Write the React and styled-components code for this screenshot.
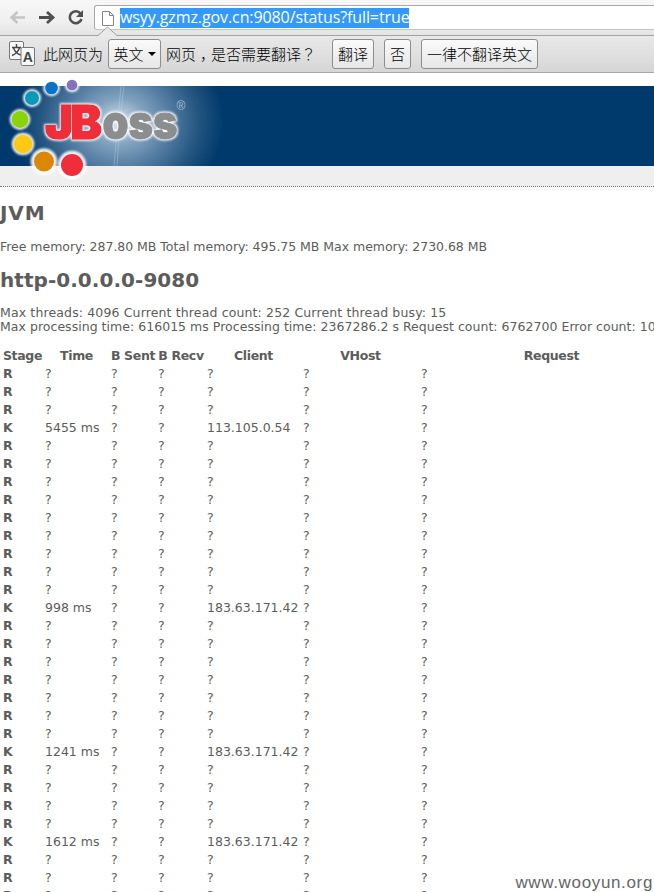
import React from "react";
import styled, { createGlobalStyle } from "styled-components";

const GlobalStyle = createGlobalStyle`
  * { box-sizing: border-box; }
  body { margin: 0; background: #fff; overflow: hidden; }
`;

const Page = styled.div`
  position: relative;
  width: 654px;
  height: 892px;
  overflow: hidden;
  background: #fff;
  color: #5c5c5c;
  font: 12.5px/14px "DejaVu Sans", Verdana, sans-serif;
`;

const Toolbar = styled.div`
  display: flex;
  align-items: flex-start;
  height: 36px;
  padding: 5px 0 0;
  background: linear-gradient(#f7f7f7, #f0f0f0 60%, #e4e4e4);
  border-bottom: 1px solid #a3a3a3;
`;

const NavIcons = styled.svg`
  flex: none;
  width: 94px;
  height: 25px;
`;

const AddressBar = styled.div`
  flex: 1;
  display: flex;
  align-items: center;
  height: 25px;
  padding-left: 6px;
  background: #fff;
  border: 1px solid #a9a9a9;
  border-bottom-color: #c4c4c4;
  border-right: 0;
  border-radius: 3px 0 0 3px;
`;

const FileIcon = styled.svg`
  flex: none;
  width: 14px;
  height: 18px;
  margin-right: 5px;
`;

const SelectedUrl = styled.span`
  width: 289px;
  height: 20px;
  background: #3399ff;
  color: #fff;
  font: 16px/19px "Open Sans", "Noto Sans", sans-serif;
  letter-spacing: -0.1px;
  white-space: nowrap;
`;

const TranslateBar = styled.div`
  position: relative;
  display: flex;
  align-items: center;
  height: 37px;
  padding: 0 0 1px 8px;
  background: linear-gradient(#e9e9e9, #d6d6d6);
  border-bottom: 1px solid #a8a8a8;
  color: #000;
  font: 300 15px/20px "Noto Sans CJK SC", sans-serif;
  white-space: nowrap;
`;

const BarPointer = styled.svg`
  position: absolute;
  left: 98px;
  top: -10px;
  width: 19px;
  height: 11px;
`;

const TranslateIcon = styled.svg`
  flex: none;
  width: 28px;
  height: 28px;
`;

const BarText = styled.span`
  width: ${(p) => p.$w}px;
  margin-left: ${(p) => p.$gap}px;
  padding-top: 1px;
`;

const Comma = styled.span`
  display: inline-block;
  width: 15px;
  padding-left: 4px;
`;

const CenteredMark = styled.span`
  font-family: "Noto Sans CJK TC", sans-serif;
`;

const BarButton = styled.button`
  display: flex;
  align-items: center;
  justify-content: center;
  flex: none;
  width: ${(p) => p.$w}px;
  height: 30px;
  margin: 0 0 0 ${(p) => p.$gap}px;
  padding: 1px 0 0;
  background: linear-gradient(#fafafa, #e6e6e6);
  border: 1px solid #8d8d8d;
  border-radius: 3px;
  color: #000;
  font: inherit;
`;

const Caret = styled.span`
  margin-left: 4px;
  border: 4px solid transparent;
  border-top-color: #000;
  border-bottom: 0;
`;

const Banner = styled.header`
  height: 80px;
  margin-top: 13px;
  background: radial-gradient(ellipse 105px 92px at 119px 36px, #d4e3ed 0, #82a3bf 25%, #4e789f 52%, #235580 76%, #003a6c 100%) #003a6c;
`;

const Logo = styled.svg`
  display: block;
  position: relative;
  top: -13px;
  width: 240px;
  height: 108px;
  overflow: visible;
`;

const SubBanner = styled.div`
  height: 21px;
  background: #efefef;
  border-bottom: 1px dotted #777;
`;

const Heading = styled.h1`
  margin: 0;
  padding-top: ${(p) => p.$top}px;
  font-size: 20px;
  line-height: 24px;
  letter-spacing: ${(p) => p.$ls || 0}px;
`;

const Stats = styled.p`
  margin: 0;
  padding-top: ${(p) => p.$top || 0}px;
  letter-spacing: ${(p) => p.$ls || 0}px;
  white-space: nowrap;
`;

const Table = styled.div`
  padding: 13px 0 0 3px;
`;

const Row = styled.div`
  display: grid;
  grid-template-columns: 42px 66px 47px 49px 96px 118px 264px;
  height: 18px;
  line-height: 18px;
  white-space: nowrap;
`;

const HeadCell = styled.div`
  display: flex;
  justify-content: center;
  padding-right: 3px;
  font-weight: bold;
  letter-spacing: -0.35px;
`;

const Cell = styled.div`
  font-weight: ${(p) => (p.$bold ? "bold" : "normal")};
`;

const Watermark = styled.div`
  position: absolute;
  right: 1px;
  bottom: 0;
  color: #666;
  font: 17px/18px "Liberation Sans", Arial, sans-serif;
  letter-spacing: 0.65px;
`;

const columns = ["Stage", "Time", "B Sent", "B Recv", "Client", "VHost", "Request"];
const keepAlive = {
  3: ["5455 ms", "113.105.0.54"],
  13: ["998 ms", "183.63.171.42"],
  21: ["1241 ms", "183.63.171.42"],
  26: ["1612 ms", "183.63.171.42"],
};
const rows = Array.from({ length: 30 }, (_, i) => {
  const k = keepAlive[i];
  return [k ? "K" : "R", k ? k[0] : "?", "?", "?", k ? k[1] : "?", "?", "?"];
});

const dots = [
  [72, 85, 5.3, "#8472b8"],
  [51.5, 88, 6.3, "#0872c8"],
  [32, 98, 7, "#0898b8"],
  [20, 119.5, 8.4, "#8ad409"],
  [23, 144, 9.3, "#ffc914"],
  [44, 161.5, 10, "#dc8708"],
  [72, 165, 11, "#ee2e38"],
];

function JBossLogo() {
  return (
    <Logo viewBox="0 73 240 108">
      <defs>
        <filter id="soft" x="-30%" y="-30%" width="160%" height="160%">
          <feGaussianBlur stdDeviation="1" />
        </filter>
        <filter id="halo" x="-10%" y="-20%" width="120%" height="140%">
          <feMorphology in="SourceAlpha" operator="dilate" radius="1" />
          <feGaussianBlur stdDeviation="1.3" result="spread" />
          <feFlood floodColor="#fff" />
          <feComposite in2="spread" operator="in" />
          <feMerge>
            <feMergeNode />
            <feMergeNode in="SourceGraphic" />
          </feMerge>
        </filter>
      </defs>
      <path d="M121 86L118 119L114 166M124 86L120 119L117 166" stroke="#c9dcea" strokeWidth="1" fill="none" opacity="0.35" />
      {dots.map(([x, y, r, c]) => (
        <g key={c}>
          <circle cx={x} cy={y} r={r + (r > 9.5 ? 3.3 : 2)} fill="#fff" opacity="0.9" filter="url(#soft)" />
          <circle cx={x} cy={y} r={r} fill={c} />
        </g>
      ))}
      <g filter="url(#halo)" fontFamily="Inter, Liberation Sans, sans-serif" fontWeight="900" fontSize="47" strokeLinejoin="miter">
        <text x="102.500" y="138.800" fill="#8b8d8e" stroke="#8b8d8e" strokeWidth="1" textLength="75" lengthAdjust="spacingAndGlyphs">oss</text>
        <text x="45" y="138.500" fill="#ee2e38" stroke="#ee2e38" strokeWidth="1.500" textLength="57" lengthAdjust="spacing">JB</text>
      </g>
      <text x="181" y="110" textAnchor="middle" fontFamily="Liberation Sans" fontSize="12" fill="#a9c0d3">®</text>
    </Logo>
  );
}

export default function App() {
  return (
    <Page>
      <GlobalStyle />
      <Toolbar>
        <NavIcons viewBox="0 5 94 25" fill="none" strokeWidth="2.400">
          <path d="M25 17.500H12M17.500 12L11.500 17.500L17.500 23" stroke="#c4c4c4" />
          <path d="M39 17.500H52M47 12L53 17.500L47 23" stroke="#505050" strokeWidth="2.800" />
          <path d="M80.500 13.500A6 6 0 1 0 81.500 19" stroke="#505050" strokeWidth="2.600" />
          <path d="M83 10V17H76Z" fill="#505050" />
        </NavIcons>
        <AddressBar>
          <FileIcon viewBox="0 0 14 18" fill="#fff" stroke="#858585">
            <path d="M1.500 2.500H8.500L12.500 6.500V16.500H1.500Z" />
            <path d="M8.500 2.500V6.500H12.500" fill="none" />
          </FileIcon>
          <SelectedUrl>wsyy.gzmz.gov.cn:9080/status?full=true</SelectedUrl>
        </AddressBar>
      </Toolbar>
      <TranslateBar>
        <BarPointer viewBox="0 0 19 11">
          <path d="M0 10L9.500 1L19 10V11H0Z" fill="#e9e9e9" />
          <path d="M0 9.500L9.500 1L19 9.500" fill="none" stroke="#a0a0a0" />
        </BarPointer>
        <TranslateIcon viewBox="0 0 28 28">
          <rect x="1.500" y="1.500" width="14" height="18" rx="1.500" fill="#f7f7f7" stroke="#777" />
          <path d="M8.500 4V7M4 7.500H13M5.500 8C7 12 9 14 13 15M11.500 8C10 12 8 14 4 15.500" fill="none" stroke="#444" strokeWidth="1.400" />
          <rect x="13" y="7.500" width="13.500" height="18" rx="1.500" fill="#f7f7f7" stroke="#777" />
          <text x="19.700" y="22" textAnchor="middle" fontFamily="Liberation Sans" fontWeight="bold" fontSize="14" fill="#444">A</text>
        </TranslateIcon>
        <BarText $w={60} $gap={7}>此网页为</BarText>
        <BarButton $w={53} $gap={5}>英文<Caret /></BarButton>
        <BarText $w={150} $gap={5}>网页<Comma>，</Comma>是否需要翻译<CenteredMark>？</CenteredMark></BarText>
        <BarButton $w={42} $gap={16}>翻译</BarButton>
        <BarButton $w={27} $gap={10}>否</BarButton>
        <BarButton $w={117} $gap={10}>一律不翻译英文</BarButton>
      </TranslateBar>
      <Banner><JBossLogo /></Banner>
      <SubBanner />
      <Heading $top={14} $ls={0.9}>JVM</Heading>
      <Stats $top={15} $ls={-0.03}>Free memory: 287.80 MB Total memory: 495.75 MB Max memory: 2730.68 MB</Stats>
      <Heading $top={14} $ls={0.05}>http-0.0.0.0-9080</Heading>
      <Stats $top={14} $ls={0.137}>Max threads: 4096 Current thread count: 252 Current thread busy: 15</Stats>
      <Stats $ls={0.03}>Max processing time: 616015 ms Processing time: 2367286.2 s Request count: 6762700 Error count: 10</Stats>
      <Table>
        <Row>{columns.map((c) => <HeadCell key={c}>{c}</HeadCell>)}</Row>
        {rows.map((r, i) => (
          <Row key={i}>{r.map((v, j) => <Cell key={j} $bold={j === 0}>{v}</Cell>)}</Row>
        ))}
      </Table>
      <Watermark>www.wooyun.org</Watermark>
    </Page>
  );
}
